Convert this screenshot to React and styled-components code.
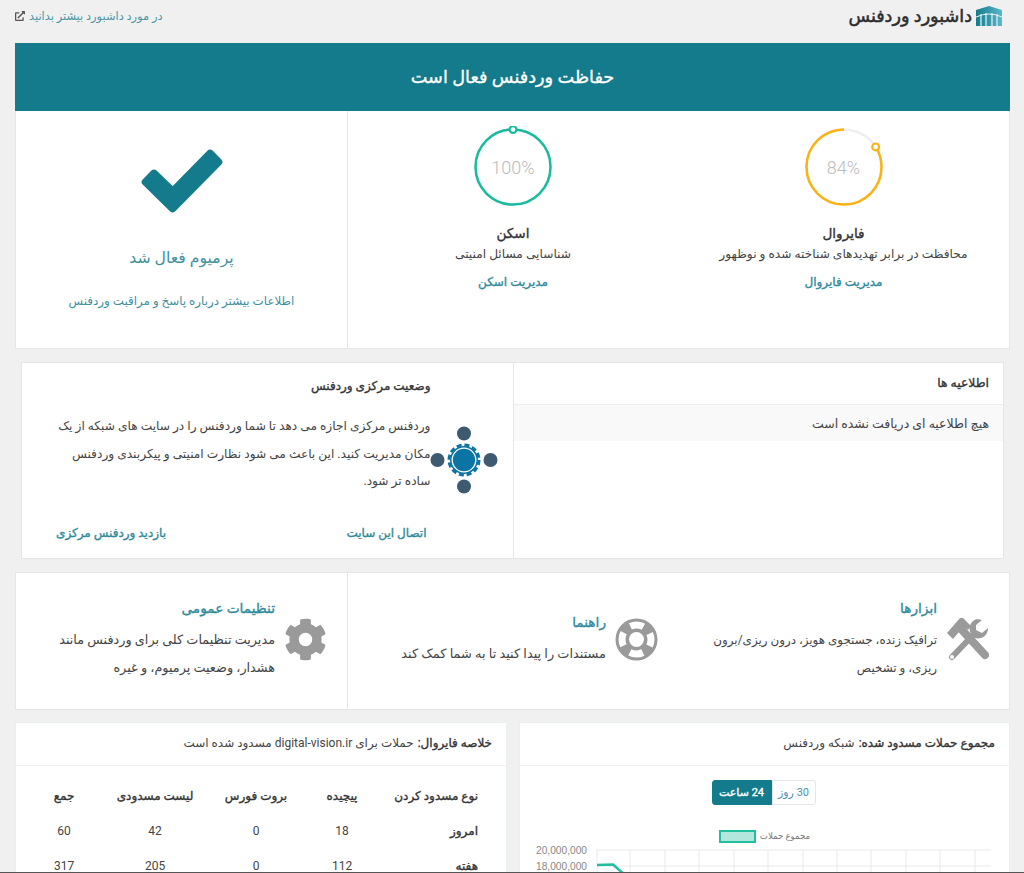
import styled, { createGlobalStyle, css } from "styled-components";
import { FaCog, FaExternalLinkAlt } from "react-icons/fa";

const GlobalStyle = createGlobalStyle`
  html, body {
    margin: 0;
    padding: 0;
    background: #f0f0f1;
    overflow: hidden;
  }
  * {
    box-sizing: border-box;
  }
`;

const TEAL = "#137b8b";
const LINK = "#2f8a9b";

// the bold cut of the fallback font is too wide, so thicken the regular one
const medium = css`
  font-weight: 400;
  -webkit-text-stroke: 0.35px currentColor;
`;

const Ring = ({ percent, color }) => {
  const r = 37.5;
  const c = 2 * Math.PI * r;
  const angle = (percent / 100) * 2 * Math.PI;
  // the arc runs counter clockwise from the top, so the knob sits on its open end
  const knobX = 41 + r * Math.sin(2 * Math.PI - angle);
  const knobY = 41 - r * Math.cos(2 * Math.PI - angle);
  return (
    <RingWrap>
      <svg width="82" height="82" viewBox="0 0 82 82">
        <circle cx="41" cy="41" r={r} fill="none" stroke="#eeeeee" strokeWidth="2.5" />
        <circle
          cx="41"
          cy="41"
          r={r}
          fill="none"
          stroke={color}
          strokeWidth="2.5"
          strokeDasharray={`${(c * percent) / 100} ${c}`}
          transform="translate(82 0) scale(-1 1) rotate(-90 41 41)"
        />
        <circle cx={knobX} cy={knobY} r="3.4" fill="#fff" stroke={color} strokeWidth="2.2" />
      </svg>
      <RingLabel>{percent}%</RingLabel>
    </RingWrap>
  );
};

const CheckIcon = () => (
  <svg width="90" height="72" viewBox="0 0 90 72">
    <path
      d="M35.7 64.3 L8.7 38 L17 29.7 L35.7 47.7 L73 9.7 L81.3 18 Z"
      fill={TEAL}
      stroke={TEAL}
      strokeWidth="8"
      strokeLinejoin="round"
    />
  </svg>
);

const LogoIcon = () => (
  <svg width="28" height="22" viewBox="0 0 28 22">
    <defs>
      <linearGradient id="logoFill" x1="0" y1="0" x2="1" y2="0">
        <stop offset="0" stopColor="#137b8b" />
        <stop offset="1" stopColor="#5ab8cc" />
      </linearGradient>
    </defs>
    <path d="M1 5 L14 1 L27 5 L27 21 L1 21 Z" fill="url(#logoFill)" />
    <path d="M1 12 Q14 6 27 12" fill="none" stroke="#e8f3f5" strokeWidth="1" />
    <path d="M6 9 V21 M11 8 V21 M17 8 V21 M22 9 V21" stroke="#e8f3f5" strokeWidth="1.2" />
  </svg>
);

const NetworkIcon = () => (
  <svg width="68" height="68" viewBox="0 0 68 68">
    <circle cx="34" cy="7.5" r="7" fill="#3d5a71" />
    <circle cx="7.5" cy="34" r="7" fill="#3d5a71" />
    <circle cx="60.5" cy="34" r="7" fill="#3d5a71" />
    <circle cx="34" cy="60.5" r="7" fill="#3d5a71" />
    <circle cx="34" cy="34" r="15" fill="none" stroke="#0b74a5" strokeWidth="3" strokeDasharray="5 2.85" />
    <circle cx="34" cy="34" r="14" fill="#0b74a5" />
    <circle cx="34" cy="34" r="11.8" fill="none" stroke="#fff" strokeWidth="1.3" />
  </svg>
);

const ToolsIcon = () => (
  <svg width="43" height="46" viewBox="0 0 43 46" fill="#9a9a9a">
    <path d="M1 16 L14 1 L17 1 L25 9 L22 13 L18 10 L13 15 L7 22 Z" />
    <path d="M16 13 L39 38" stroke="#9a9a9a" strokeWidth="8" strokeLinecap="round" />
    <path d="M6 40 L28 17" stroke="#9a9a9a" strokeWidth="6" strokeLinecap="round" />
    <circle cx="6" cy="40" r="2" fill="#fff" />
    <path d="M31 2 A10 10 0 0 0 24 15 L29 21 A10 10 0 0 0 42 11 L36 16 L30 13 L30 8 L36 3 Z" />
  </svg>
);

const RingBuoyIcon = () => (
  <svg width="43" height="43" viewBox="0 0 43 43">
    <circle cx="21.5" cy="21.5" r="21" fill="#9a9a9a" />
    <circle
      cx="21.5"
      cy="21.5"
      r="14.5"
      fill="none"
      stroke="#fff"
      strokeWidth="7"
      strokeDasharray="13.5 9.28"
      strokeDashoffset="6.75"
    />
    <circle cx="21.5" cy="21.5" r="7.5" fill="#fff" />
  </svg>
);

const Chart = () => {
  const xs = [597, 630, 665, 699, 734, 768, 803, 837, 871, 906, 940, 975];
  return (
    <ChartSvg width="489" height="40" viewBox="520 845 489 40">
      {xs.map((x) => (
        <line key={x} x1={x} x2={x} y1="850" y2="885" stroke="#e9e9e9" />
      ))}
      <line x1="597" x2="991" y1="850" y2="850" stroke="#e9e9e9" />
      <line x1="597" x2="991" y1="866" y2="866" stroke="#e9e9e9" />
      <ChartTick x="587" y="854">20,000,000</ChartTick>
      <ChartTick x="587" y="870">18,000,000</ChartTick>
      <path d="M597 865 L613 864.5 L626 876" fill="none" stroke="#1fbf9f" strokeWidth="2.5" />
    </ChartSvg>
  );
};

const rows = [
  { name: "امروز", values: [18, 0, 42, 60] },
  { name: "هفته", values: [112, 0, 205, 317] },
];

export default function App() {
  return (
    <Page dir="rtl">
      <GlobalStyle />
      <Header>
        <Brand>
          <LogoIcon />
          <BrandName>داشبورد وردفنس</BrandName>
        </Brand>
        <LearnMore href="#">
          در مورد داشبورد بیشتر بدانید
          <FaExternalLinkAlt size={10} color="#555" />
        </LearnMore>
      </Header>

      <Banner>حفاظت وردفنس فعال است</Banner>

      <ThreeCols>
        <StatusCol>
          <Ring percent={84} color="#fcb214" />
          <StatusTitle>فایروال</StatusTitle>
          <StatusDesc>محافظت در برابر تهدیدهای شناخته شده و نوظهور</StatusDesc>
          <StatusLink href="#">مدیریت فایروال</StatusLink>
        </StatusCol>
        <StatusCol>
          <Ring percent={100} color="#16bc9b" />
          <StatusTitle>اسکن</StatusTitle>
          <StatusDesc>شناسایی مسائل امنیتی</StatusDesc>
          <StatusLink href="#">مدیریت اسکن</StatusLink>
        </StatusCol>
        <PremiumCol>
          <CheckIcon />
          <PremiumTitle>پرمیوم فعال شد</PremiumTitle>
          <PremiumLink href="#">اطلاعات بیشتر درباره پاسخ و مراقبت وردفنس</PremiumLink>
        </PremiumCol>
      </ThreeCols>

      <TwoPanels>
        <NoticePanel>
          <NoticeTitle>اطلاعیه ها</NoticeTitle>
          <NoticeRow>هیچ اطلاعیه ای دریافت نشده است</NoticeRow>
        </NoticePanel>
        <CentralPanel>
          <CentralIcon>
            <NetworkIcon />
          </CentralIcon>
          <CentralBody>
            <CentralTitle>وضعیت مرکزی وردفنس</CentralTitle>
            <CentralText>
              وردفنس مرکزی اجازه می دهد تا شما وردفنس را در سایت های شبکه از یک
              <br />
              مکان مدیریت کنید. این باعث می شود نظارت امنیتی و پیکربندی وردفنس
              <br />
              ساده تر شود.
            </CentralText>
            <CentralLinks>
              <BoldLink href="#">اتصال این سایت</BoldLink>
              <BoldLink href="#">بازدید وردفنس مرکزی</BoldLink>
            </CentralLinks>
          </CentralBody>
        </CentralPanel>
      </TwoPanels>

      <ThreeCols $spaced>
        <ToolCol>
          <ToolIconBox>
            <ToolsIcon />
          </ToolIconBox>
          <div>
            <ToolTitle>ابزارها</ToolTitle>
            <ToolText $size={11.9}>
              ترافیک زنده، جستجوی هویز، درون ریزی/برون
              <br />
              ریزی، و تشخیص
            </ToolText>
          </div>
        </ToolCol>
        <ToolCol>
          <ToolIconBox>
            <RingBuoyIcon />
          </ToolIconBox>
          <div>
            <ToolTitle>راهنما</ToolTitle>
            <ToolText $size={12.9}>مستندات را پیدا کنید تا به شما کمک کند</ToolText>
          </div>
        </ToolCol>
        <ToolCol>
          <ToolIconBox>
            <FaCog size={43} />
          </ToolIconBox>
          <div>
            <ToolTitle>تنظیمات عمومی</ToolTitle>
            <ToolText $size={12.8}>
              مدیریت تنظیمات کلی برای وردفنس مانند
              <br />
              هشدار، وضعیت پرمیوم، و غیره
            </ToolText>
          </div>
        </ToolCol>
      </ThreeCols>

      <BottomRow>
        <Card>
          <CardHead>
            <strong>مجموع حملات مسدود شده:</strong> شبکه وردفنس
          </CardHead>
          <RangeBar>
            <RangeButton>30 روز</RangeButton>
            <RangeButton $active>24 ساعت</RangeButton>
          </RangeBar>
          <Legend>
            <LegendText>مجموع حملات</LegendText>
            <LegendBox />
          </Legend>
          <Chart />
        </Card>
        <Card>
          <CardHead>
            <strong>خلاصه فایروال:</strong> حملات برای digital-vision.ir مسدود شده است
          </CardHead>
          <SummaryTable>
            <HeadCell $start>نوع مسدود کردن</HeadCell>
            <HeadCell>پیچیده</HeadCell>
            <HeadCell>بروت فورس</HeadCell>
            <HeadCell>لیست مسدودی</HeadCell>
            <HeadCell>جمع</HeadCell>
            {rows.map((row) => (
              <SummaryRow key={row.name}>
                <HeadCell $start>{row.name}</HeadCell>
                {row.values.map((v, i) => (
                  <ValueCell key={i}>{v}</ValueCell>
                ))}
              </SummaryRow>
            ))}
          </SummaryTable>
        </Card>
      </BottomRow>
    </Page>
  );
}

const Page = styled.div`
  width: 1024px;
  height: 873px;
  overflow: hidden;
  padding: 0 14px 0 15px;
  border-bottom: 1.5px solid #555;
  background: #f0f0f1;
  color: #444;
  font-family: Roboto, "DejaVu Sans", sans-serif;
  font-size: 12.2px;
`;

const Header = styled.header`
  height: 43px;
  display: flex;
  justify-content: space-between;
  align-items: flex-start;
`;

const Brand = styled.div`
  display: flex;
  align-items: center;
  gap: 3px;
  margin-top: 5px;
  margin-right: 7px;
`;

const BrandName = styled.h1`
  ${medium}
  margin: 0;
  font-size: 17.6px;
  -webkit-text-stroke-width: 0.5px;
  color: #2d2d2d;
`;

const LearnMore = styled.a`
  display: flex;
  align-items: center;
  gap: 4px;
  margin-top: 9px;
  font-size: 11.4px;
  color: #4c96a5;
  text-decoration: none;
`;

const Banner = styled.div`
  ${medium}
  height: 68px;
  display: flex;
  align-items: center;
  justify-content: center;
  background: ${TEAL};
  color: #fff;
  font-size: 17.7px;
`;

const ThreeCols = styled.section`
  margin-top: ${(p) => (p.$spaced ? 13 : 0)}px;
  display: grid;
  grid-template-columns: 331px 330px 332px;
  background: #fff;
  border: 1px solid #e4e7e9;
  border-top-width: ${(p) => (p.$spaced ? 1 : 0)}px;

  & > *:last-child {
    border-right: 1px solid #e4e7e9;
  }
`;

const StatusCol = styled.div`
  height: 237px;
  padding-top: 15px;
  display: flex;
  flex-direction: column;
  align-items: center;
`;

const RingWrap = styled.div`
  position: relative;
  width: 82px;
  height: 82px;
`;

const RingLabel = styled.span`
  position: absolute;
  inset: 0;
  display: flex;
  align-items: center;
  justify-content: center;
  direction: ltr;
  font-size: 18px;
  font-weight: 300;
  color: #bbb;
`;

const StatusTitle = styled.h3`
  ${medium}
  margin: 15px 0 0;
  font-size: 13.6px;
  line-height: 20px;
  color: #333;
`;

const StatusDesc = styled.p`
  margin: 1px 0 0;
  line-height: 20px;
`;

const StatusLink = styled.a`
  ${medium}
  margin-top: 8px;
  font-size: 12px;
  line-height: 20px;
  color: ${LINK};
  text-decoration: none;
`;

const PremiumCol = styled.div`
  height: 237px;
  padding-top: 33px;
  display: flex;
  flex-direction: column;
  align-items: center;
`;

const PremiumTitle = styled.h3`
  margin: 30px 0 0;
  font-size: 15.7px;
  font-weight: 400;
  line-height: 24px;
  color: #3f8f9f;
`;

const PremiumLink = styled.a`
  margin-top: 22px;
  font-size: 11.9px;
  line-height: 18px;
  color: #3f8f9f;
  text-decoration: none;
`;

const TwoPanels = styled.section`
  margin: 13px 6px 0;
  display: grid;
  grid-template-columns: 1fr 1fr;
  height: 197px;
  background: #fff;
  border: 1px solid #e4e7e9;
`;

const NoticePanel = styled.div`
  border-left: 1px solid #e4e7e9;
`;

const NoticeTitle = styled.h3`
  ${medium}
  margin: 0;
  height: 42px;
  padding: 11px 14px 0;
  font-size: 12.4px;
  line-height: 18px;
  color: #333;
  border-bottom: 1px solid #eee;
`;

const NoticeRow = styled.div`
  height: 36px;
  padding: 0 14px;
  display: flex;
  align-items: center;
  background: #f9f9f9;
  font-size: 12.5px;
`;

const CentralPanel = styled.div`
  display: flex;
  padding: 0 15px 0 0;
`;

const CentralIcon = styled.div`
  width: 68px;
  padding-top: 63px;
  flex: none;
`;

const CentralBody = styled.div`
  flex: 1;
  padding-left: 34px;
  margin-right: -1px;
`;

const CentralTitle = styled.h3`
  ${medium}
  margin: 14px 0 0;
  font-size: 12px;
  line-height: 18px;
  color: #333;
`;

const CentralText = styled.p`
  margin: 18px 0 0;
  line-height: 27.5px;
  white-space: nowrap;
`;

const CentralLinks = styled.div`
  margin-top: 28px;
  padding: 0 4px 0 0;
  display: flex;
  justify-content: space-between;
`;

const BoldLink = styled.a`
  ${medium}
  font-size: 12px;
  line-height: 18px;
  color: ${LINK};
  text-decoration: none;
`;

const ToolCol = styled.div`
  height: 136px;
  padding: 0 20px 3px 0;
  display: flex;
  align-items: center;
  gap: 9px;
`;

const ToolIconBox = styled.div`
  display: flex;
  flex: none;
  color: #9a9a9a;
`;

const ToolTitle = styled.h3`
  ${medium}
  margin: 0 0 8px;
  font-size: 13.7px;
  line-height: 20px;
  color: ${LINK};
`;

const ToolText = styled.p`
  margin: 0;
  font-size: ${(p) => p.$size}px;
  line-height: 28px;
  white-space: nowrap;
`;

const BottomRow = styled.section`
  margin-top: 12px;
  display: grid;
  grid-template-columns: 491px 492px;
  justify-content: space-between;
`;

const Card = styled.article`
  height: 160px;
  background: #fff;
  border: 1px solid #e9eff3;
  overflow: hidden;
`;

const CardHead = styled.h3`
  margin: 0;
  height: 43px;
  padding: 0 14px 2px;
  display: flex;
  align-items: center;
  gap: 4px;
  font-size: 12px;
  font-weight: 400;
  border-bottom: 1px solid #f1f1f1;

  strong {
    ${medium}
    color: #333;
  }
`;

const RangeBar = styled.div`
  margin-top: 14px;
  display: flex;
  justify-content: center;
  transform: translateX(-1px);
`;

const RangeButton = styled.button`
  width: ${(p) => (p.$active ? 60 : 44)}px;
  height: 25px;
  padding: 0;
  border: 1px solid ${(p) => (p.$active ? TEAL : "#e4e7e9")};
  border-radius: ${(p) => (p.$active ? "3px 0 0 3px" : "0 3px 3px 0")};
  background: ${(p) => (p.$active ? TEAL : "#fff")};
  color: ${(p) => (p.$active ? "#fff" : "#4a8fb5")};
  font-family: inherit;
  font-size: 11px;
  ${(p) => p.$active && medium}
`;

const Legend = styled.div`
  margin-top: 24px;
  height: 14px;
  display: flex;
  justify-content: center;
  align-items: center;
  gap: 4px;
`;

const LegendText = styled.span`
  font-size: 8.6px;
  color: #777;
`;

const LegendBox = styled.span`
  width: 37px;
  height: 13px;
  background: #b3e6dc;
  border: 2px solid #1fbf9f;
`;

const ChartSvg = styled.svg`
  display: block;
  margin-top: 2px;
  direction: ltr;
`;

const ChartTick = styled.text`
  font-family: "Liberation Sans", sans-serif;
  font-size: 10.2px;
  fill: #888;
  text-anchor: end;
`;

const SummaryTable = styled.div`
  margin: 12px 28px 0 0;
  display: grid;
  grid-template-columns: 91px 90px 82px 120px 62px;
`;

const SummaryRow = styled.div`
  display: contents;
`;

const HeadCell = styled.div`
  ${medium}
  height: 35px;
  display: flex;
  align-items: center;
  justify-content: ${(p) => (p.$start ? "flex-start" : "center")};
  font-size: 12px;
  color: #333;
  white-space: nowrap;
`;

const ValueCell = styled.div`
  height: 35px;
  display: flex;
  align-items: center;
  justify-content: center;
  font-size: 12px;
`;
